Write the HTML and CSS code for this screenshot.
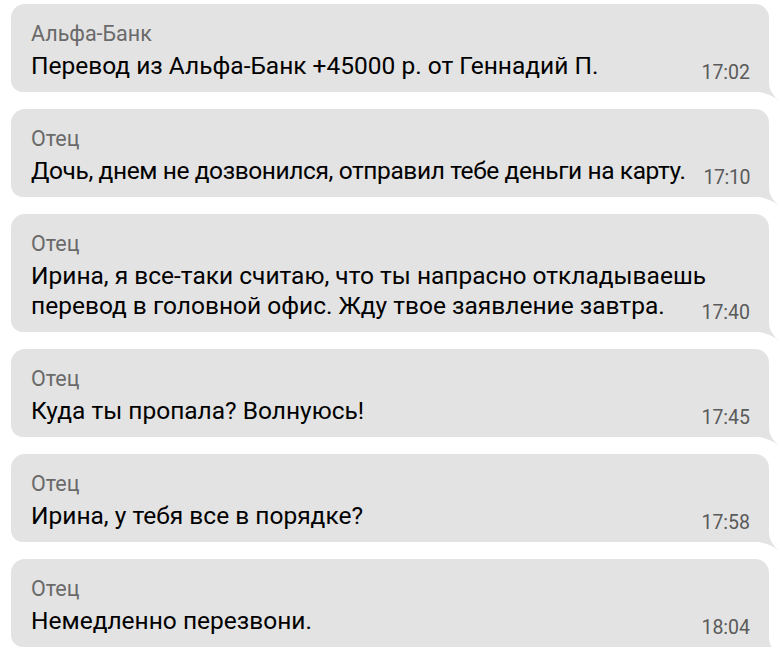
FILE: index.html
```html
<!DOCTYPE html>
<html lang="ru">
<head>
  <meta charset="UTF-8">
  <meta name="viewport" content="width=device-width, initial-scale=1.0">
  <title>Сообщения</title>
  <link rel="stylesheet" href="styles.css">
</head>
<body>

  <div class="thread">

    <div class="bubble">
      <div class="sender">Альфа-Банк</div>
      <div class="msg-row">
        <p class="text">Перевод из Альфа-Банк +45000 р. от Геннадий П.</p>
        <span class="time">17:02</span>
      </div>
      <svg class="tail" viewBox="0 0 20 20"><path d="M0 0 L10 0 L10 2 Q10 11 20 20 Q12 13 0 11 Z"/></svg>
    </div>

    <div class="bubble">
      <div class="sender">Отец</div>
      <div class="msg-row">
        <p class="text tight">Дочь, днем не дозвонился, отправил тебе деньги на карту.</p>
        <span class="time tight">17:10</span>
      </div>
      <svg class="tail" viewBox="0 0 20 20"><path d="M0 0 L10 0 L10 2 Q10 11 20 20 Q12 13 0 11 Z"/></svg>
    </div>

    <div class="bubble">
      <div class="sender">Отец</div>
      <div class="msg-row">
        <p class="text">Ирина, я все-таки считаю, что ты напрасно откладываешь перевод в головной офис. Жду твое заявление завтра.</p>
        <span class="time">17:40</span>
      </div>
      <svg class="tail" viewBox="0 0 20 20"><path d="M0 0 L10 0 L10 2 Q10 11 20 20 Q12 13 0 11 Z"/></svg>
    </div>

    <div class="bubble">
      <div class="sender">Отец</div>
      <div class="msg-row">
        <p class="text">Куда ты пропала? Волнуюсь!</p>
        <span class="time">17:45</span>
      </div>
      <svg class="tail" viewBox="0 0 20 20"><path d="M0 0 L10 0 L10 2 Q10 11 20 20 Q12 13 0 11 Z"/></svg>
    </div>

    <div class="bubble">
      <div class="sender">Отец</div>
      <div class="msg-row">
        <p class="text">Ирина, у тебя все в порядке?</p>
        <span class="time">17:58</span>
      </div>
      <svg class="tail" viewBox="0 0 20 20"><path d="M0 0 L10 0 L10 2 Q10 11 20 20 Q12 13 0 11 Z"/></svg>
    </div>

    <div class="bubble">
      <div class="sender">Отец</div>
      <div class="msg-row">
        <p class="text">Немедленно перезвони.</p>
        <span class="time">18:04</span>
      </div>
      <svg class="tail" viewBox="0 0 20 20"><path d="M0 0 L10 0 L10 2 Q10 11 20 20 Q12 13 0 11 Z"/></svg>
    </div>

  </div>

</body>
</html>
```

FILE: styles.css
```css
body {
  font-family: Roboto, 'Noto Sans', sans-serif;
  background-color: #fff;
  color: #000;
  margin: 0;
}

.thread {
  display: flex;
  flex-direction: column;
  gap: 17px;
  padding: 4px 11px 0 11px;
}

.bubble {
  position: relative;
  background-color: #e3e3e3;
  border-radius: 14px 14px 0 12px;
  padding: 17px 19px 11px 20px;
}

.sender {
  font-size: 21.5px;
  line-height: 25px;
  color: #6a6a6a;
}

/* text and time share one cell, time sits in the bottom right corner */
.msg-row {
  display: grid;
  margin-top: 5px;
}

.text {
  grid-area: 1 / 1;
  margin: 0;
  font-size: 24.5px;
  line-height: 30px;
}

.time {
  grid-area: 1 / 1;
  justify-self: end;
  align-self: end;
  font-size: 19.5px;
  line-height: 22px;
  color: #5a5a5a;
  margin-bottom: -3px;
  white-space: nowrap;
}

/* this line is squeezed a bit in the original so it fits beside the time */
.tight {
  letter-spacing: -0.4px;
}

/* little corner tail on the right */
.tail {
  position: absolute;
  right: -10px;
  bottom: -9px;
  width: 20px;
  height: 20px;
  fill: #e3e3e3;
}
```
